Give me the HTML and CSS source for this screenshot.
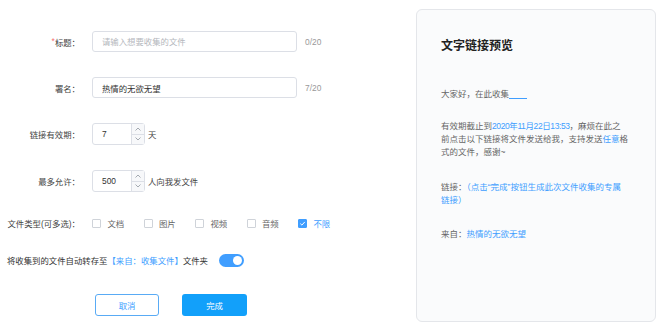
FILE: index.html
```html
<!DOCTYPE html>
<html lang="zh-CN">
<head>
<meta charset="utf-8">
<title>文件收集</title>
<link rel="stylesheet" href="styles.css">
</head>
<body>
<div class="page">
  <form class="form">
    <div class="row">
      <label class="label"><span class="req">*</span>标题：</label>
      <input class="text-input" type="text" placeholder="请输入想要收集的文件">
      <span class="count">0/20</span>
    </div>
    <div class="row">
      <label class="label">署名：</label>
      <input class="text-input" type="text" value="热情的无欲无望">
      <span class="count">7/20</span>
    </div>
    <div class="row">
      <label class="label">链接有效期：</label>
      <div class="num">
        <span class="num-val">7</span>
        <span class="spin">
          <span><svg width="6" height="4" viewBox="0 0 6 4"><path d="M0.5 3.5 L3 1 L5.5 3.5" fill="none" stroke="#9aa0a8" stroke-width="0.9"/></svg></span>
          <span><svg width="6" height="4" viewBox="0 0 6 4"><path d="M0.5 0.5 L3 3 L5.5 0.5" fill="none" stroke="#9aa0a8" stroke-width="0.9"/></svg></span>
        </span>
      </div>
      <span class="unit">天</span>
    </div>
    <div class="row">
      <label class="label">最多允许：</label>
      <div class="num">
        <span class="num-val">500</span>
        <span class="spin">
          <span><svg width="6" height="4" viewBox="0 0 6 4"><path d="M0.5 3.5 L3 1 L5.5 3.5" fill="none" stroke="#9aa0a8" stroke-width="0.9"/></svg></span>
          <span><svg width="6" height="4" viewBox="0 0 6 4"><path d="M0.5 0.5 L3 3 L5.5 0.5" fill="none" stroke="#9aa0a8" stroke-width="0.9"/></svg></span>
        </span>
      </div>
      <span class="unit">人向我发文件</span>
    </div>
    <div class="row row-checks">
      <label class="label">文件类型(可多选)：</label>
      <div class="checks">
        <span class="check"><span class="box"></span>文档</span>
        <span class="check"><span class="box"></span>图片</span>
        <span class="check"><span class="box"></span>视频</span>
        <span class="check"><span class="box"></span>音频</span>
        <span class="check check-on"><span class="box box-on"><svg width="7" height="7" viewBox="0 0 7 7"><path d="M1.3 3.6 L2.9 5.1 L5.8 1.9" fill="none" stroke="#fff" stroke-width="1"/></svg></span>不限</span>
      </div>
    </div>
    <div class="row row-switch">
      <span class="switch-text">将收集到的文件自动转存至<span class="blue">【来自：收集文件】</span>文件夹</span>
      <span class="switch"></span>
    </div>
    <div class="actions">
      <button type="button" class="btn btn-ghost">取消</button>
      <button type="button" class="btn btn-primary">完成</button>
    </div>
  </form>
  <aside class="preview">
    <h2 class="preview-title">文字链接预览</h2>
    <p class="p1">大家好，在此收集<span class="blank"></span></p>
    <p class="p2">有效期截止到<span class="blue date">2020年11月22日13:53</span>，麻烦在此之<br>前点击以下链接将文件发送给我，支持发送<span class="blue">任意</span>格<br>式的文件，感谢~</p>
    <p class="p3">链接：<span class="blue">（点击“完成”按钮生成此次文件收集的专属<br>链接）</span></p>
    <p class="p4">来自：<span class="blue">热情的无欲无望</span></p>
  </aside>
</div>
</body>
</html>
```
FILE: styles.css
```css
* { box-sizing: border-box; }

body {
  margin: 0;
  font-family: "Liberation Sans", "Noto Sans CJK SC", sans-serif;
  font-size: 8.4px;
  color: #333;
  background: #fff;
}

.page {
  display: flex;
  width: 659px;
  height: 330px;
  padding-left: 7px;
}

.form {
  width: 409px;
  flex: none;
  display: flex;
  flex-direction: column;
  gap: 25px;
  padding-top: 31px;
}

.row {
  display: flex;
  align-items: center;
}

.label {
  width: 73px;
  flex: none;
  margin-right: 12px;
  display: flex;
  justify-content: flex-end;
  white-space: nowrap;
  color: #444;
}

.req { color: #f56c6c; }

.text-input {
  width: 205px;
  height: 21px;
  border: 1px solid #dcdfe6;
  border-radius: 3px;
  padding: 0 9px;
  font: inherit;
  color: #333;
  background: #fff;
  outline: none;
}

.text-input::placeholder { color: #b4b7bd; }

.count {
  margin-left: 8px;
  color: #999;
}

.num {
  display: flex;
  width: 53px;
  height: 22px;
  border: 1px solid #dcdfe6;
  border-radius: 3px;
  background: #fff;
}

.num-val {
  flex: 1;
  display: flex;
  align-items: center;
  padding-left: 9px;
  color: #333;
}

.spin {
  width: 13px;
  display: flex;
  flex-direction: column;
  border-left: 1px solid #dcdfe6;
  background: #f7f8fa;
}

.spin > span {
  flex: 1;
  display: flex;
  align-items: center;
  justify-content: center;
}

.spin > span + span { border-top: 1px solid #dcdfe6; }

.unit {
  margin-left: 3px;
  color: #444;
}

.row-checks { height: 12px; }

.checks { display: flex; }

.check {
  width: 51.5px;
  display: flex;
  align-items: center;
  gap: 6.5px;
  color: #666;
}

.check-on { color: #409eff; }

.box {
  width: 9px;
  height: 9px;
  border: 1px solid #cfd3d9;
  border-radius: 1px;
  background: #fff;
  display: flex;
  align-items: center;
  justify-content: center;
}

.box-on {
  background: #409eff;
  border-color: #409eff;
}

.row-switch { height: 12px; }

.switch-text { color: #333; }

.blue { color: #409eff; }

.switch {
  position: relative;
  margin-left: 11px;
  width: 25px;
  height: 13px;
  border-radius: 7px;
  background: #409eff;
}

.switch::after {
  content: "";
  position: absolute;
  top: 2px;
  right: 2px;
  width: 9px;
  height: 9px;
  border-radius: 50%;
  background: #fff;
}

.actions {
  display: flex;
  gap: 23px;
  margin-left: 88px;
  margin-top: 3px;
}

.btn {
  height: 22px;
  border-radius: 3px;
  font: inherit;
  padding: 0;
  cursor: pointer;
}

.btn-ghost {
  width: 64px;
  border: 1px solid #59abf5;
  color: #409eff;
  background: #fff;
}

.btn-primary {
  width: 65px;
  border: none;
  color: #fff;
  background: #12a0fa;
}

.preview {
  flex: none;
  margin-top: 9px;
  width: 240px;
  height: 313px;
  border: 1px solid #e4e6ea;
  border-radius: 6px;
  background: #fafbfc;
  padding: 28px 25px 0 24px;
  font-size: 8.5px;
  line-height: 13.3px;
  color: #666;
}

.preview-title {
  margin: 0;
  font-size: 12px;
  line-height: 16px;
  font-weight: bold;
  color: #222;
}

.preview p {
  margin: 0;
  white-space: nowrap;
}

.p1 { margin-top: 34.3px !important; }
.p2 { margin-top: 18.3px !important; }
.p3 { margin-top: 21.3px !important; }
.p4 { margin-top: 20.4px !important; }

.date { letter-spacing: -0.4px; }

.blank {
  display: inline-block;
  width: 18px;
  height: 9px;
  border-bottom: 1px solid #409eff;
  vertical-align: -2px;
}
```
